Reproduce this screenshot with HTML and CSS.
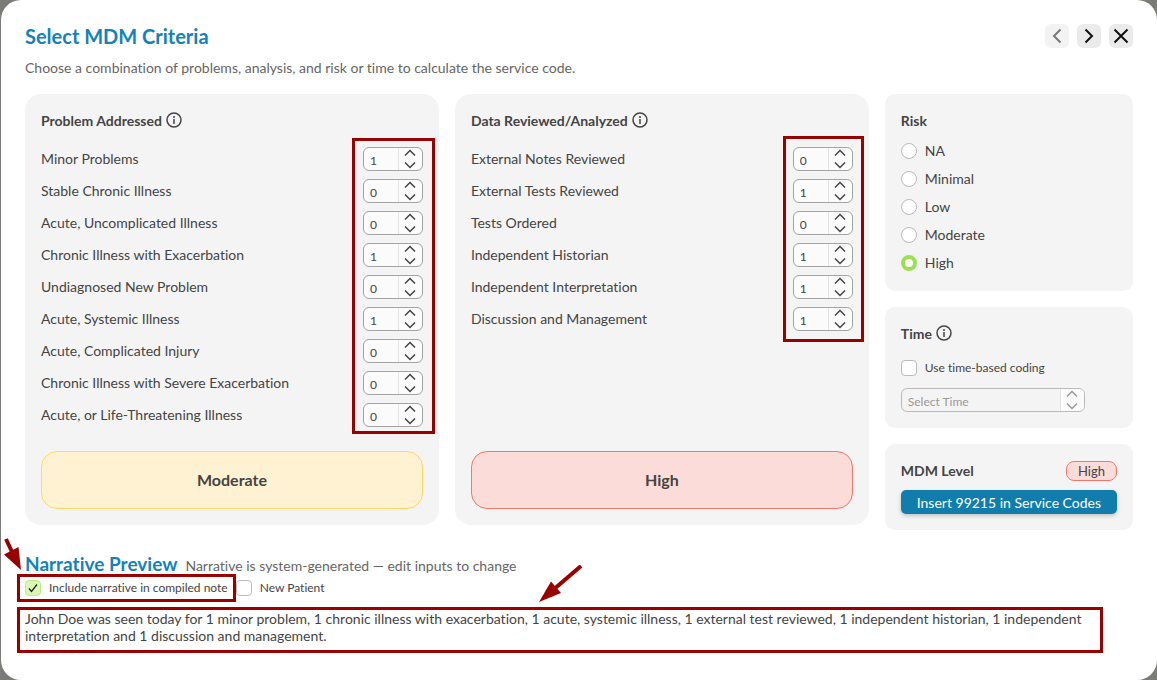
FILE: index.html
```html
<!DOCTYPE html>
<html lang="en">
<head>
    <meta charset="UTF-8">
    <meta name="viewport" content="width=device-width, initial-scale=1.0">
    <title>Select MDM Criteria</title>
    <link rel="stylesheet" href="styles.css">
</head>
<body>
    <!-- Shared icons -->
    <svg class="sprite" aria-hidden="true">
        <symbol id="up" viewBox="0 0 12 8"><path d="M1 6.5 6 1.5 11 6.5"/></symbol>
        <symbol id="down" viewBox="0 0 12 8"><path d="M1 1.5 6 6.5 11 1.5"/></symbol>
        <symbol id="info" viewBox="0 0 16 16"><circle cx="8" cy="8" r="7"/><path d="M8 7V12M8 4V6"/></symbol>
    </svg>

    <main class="modal">
        <header class="header">
            <h1>Select MDM Criteria</h1>
            <nav class="tools">
                <button type="button" aria-label="Previous" disabled><svg viewBox="0 0 24 24"><path d="M15.5 5.5 9 12l6.5 6.5"/></svg></button>
                <button type="button" aria-label="Next"><svg viewBox="0 0 24 24"><path d="M8.5 5.5 15 12l-6.5 6.5"/></svg></button>
                <button type="button" aria-label="Close"><svg viewBox="0 0 24 24"><path d="M5.5 5.5l13 13M18.5 5.5l-13 13"/></svg></button>
            </nav>
        </header>
        <p class="subtitle">Choose a combination of problems, analysis, and risk or time to calculate the service code.</p>

        <div class="layout">
            <div class="criteria">
                <section class="card">
                    <h2>Problem Addressed <svg class="info"><use href="#info"/></svg></h2>
                    <div class="rows" id="problems"></div>
                    <div class="result moderate">Moderate</div>
                </section>
                <section class="card">
                    <h2>Data Reviewed/Analyzed <svg class="info"><use href="#info"/></svg></h2>
                    <div class="rows" id="data"></div>
                    <div class="result high">High</div>
                </section>
            </div>

            <aside class="sidebar">
                <section class="card small risk">
                    <h2>Risk</h2>
                    <label><input type="radio" name="risk">NA</label>
                    <label><input type="radio" name="risk">Minimal</label>
                    <label><input type="radio" name="risk">Low</label>
                    <label><input type="radio" name="risk">Moderate</label>
                    <label><input type="radio" name="risk" checked>High</label>
                </section>
                <section class="card small time">
                    <h2>Time <svg class="info"><use href="#info"/></svg></h2>
                    <label class="check"><input type="checkbox">Use time-based coding</label>
                    <div class="select">
                        <select aria-label="Select Time" disabled>
                            <option>Select Time</option>
                        </select>
                        <span class="arrows"><svg><use href="#up"/></svg><svg><use href="#down"/></svg></span>
                    </div>
                </section>
                <section class="card small level">
                    <div class="level-head">
                        <h2>MDM Level</h2>
                        <span class="pill">High</span>
                    </div>
                    <button type="button" class="insert">Insert 99215 in Service Codes</button>
                </section>
            </aside>
        </div>

        <section class="narrative">
            <div class="narrative-head">
                <h2>Narrative Preview</h2>
                <span>Narrative is system-generated — edit inputs to change</span>
            </div>
            <div class="options">
                <label class="check marked"><input type="checkbox" checked>Include narrative in compiled note</label>
                <label class="check"><input type="checkbox">New Patient</label>
            </div>
            <p class="preview">John Doe was seen today for 1 minor problem, 1 chronic illness with exacerbation, 1 acute, systemic illness, 1 external test reviewed, 1 independent historian, 1 independent interpretation and 1 discussion and management.</p>
            <svg class="pointer pointer-left" viewBox="0 0 18 34"><path class="shaft" d="M2 1 9 16"/><path class="tip" d="M0 16.5 14.500 9 17 32Z"/></svg>
            <svg class="pointer pointer-mid" viewBox="0 0 44 38"><path class="shaft" d="M42 1 14 25"/><path class="tip" d="M0 37 12 16.500 22 28Z"/></svg>
        </section>
    </main>

    <script src="script.js"></script>
</body>
</html>
```

FILE: styles.css
```css
*, *::after {
    box-sizing: border-box;
}
body {
    margin: 0;
    background-color: #7b7b78;
    font-family: Lato, "Liberation Sans", sans-serif;
    font-size: 14px;
    font-variant-ligatures: none;
    line-height: 17px;
    color: #444;
}
h1, h2, p {
    margin: 0;
}
button, input, select {
    font-family: inherit;
    color: inherit;
}
svg {
    display: block;
    fill: none;
    stroke: currentColor;
}
.sprite {
    position: absolute;
    width: 0;
    height: 0;
}
.modal {
    min-height: 100vh;
    margin-left: 1px;
    padding: 24px;
    background-color: white;
    border-radius: 20px;
}

/* Header */
.header {
    display: flex;
    justify-content: space-between;
    align-items: center;
}
h1, .narrative h2 {
    font-size: 20px;
    line-height: 24px;
    color: #1482b8;
}
.tools {
    display: flex;
    gap: 8px;
}
.tools button {
    width: 24px;
    height: 24px;
    padding: 0;
    border: none;
    border-radius: 6px;
    background-color: #ebebeb;
    color: #111;
    stroke-width: 2;
}
.tools button:disabled {
    background-color: #f3f3f3;
    color: #777;
}
.subtitle {
    margin: 11px 0 18px;
    color: #666;
}

/* Cards */
.layout {
    display: grid;
    grid-template-columns: 17fr 5fr;
    gap: 16px;
    align-items: start;
}
.criteria {
    display: grid;
    grid-template-columns: 1fr 1fr;
    gap: 16px;
}
.card {
    display: flex;
    flex-direction: column;
    padding: 16px;
    background-color: #f4f4f4;
    border-radius: 16px;
}
.card.small {
    border-radius: 10px;
}
.card h2 {
    display: flex;
    align-items: center;
    gap: 4px;
    font-size: 14px;
    line-height: 22px;
}
.info {
    width: 16px;
    height: 16px;
    margin-bottom: 2px;
    stroke-width: 1.5px;
}
.rows {
    position: relative;
    margin: 11px 0 20px;
}
.row {
    display: flex;
    justify-content: space-between;
    align-items: center;
    height: 32px;
}
.row label {
    padding-bottom: 2px;
}
/* Highlight frame around the steppers */
.rows::after {
    content: "";
    position: absolute;
    top: -5px;
    right: -12px;
    bottom: -3px;
    width: 83px;
    border: 3px solid #900;
    pointer-events: none;
}
#data::after {
    top: -7px;
    right: -11px;
    bottom: -7px;
    width: 81px;
}
.stepper {
    display: flex;
    width: 60px;
    height: 24px;
    border: 1px solid #a3a3a3;
    border-radius: 6px;
    background-color: #fbfbfb;
    overflow: hidden;
}
.stepper input {
    flex: 1;
    min-width: 0;
    padding: 2px 0 0 6px;
    border: none;
    background: none;
    font-size: 12px;
    appearance: textfield;
}
.stepper input::-webkit-inner-spin-button {
    appearance: none;
}
.arrows {
    display: flex;
    flex-direction: column;
    justify-content: space-between;
    align-items: center;
    width: 24px;
    padding: 1px 0;
    border-left: 1px solid #e4e4e4;
    stroke-width: 1.5px;
}
.arrows button {
    padding: 0;
    border: none;
    background: none;
}
.arrows svg {
    width: 12px;
    height: 8px;
}
.result {
    margin-top: auto;
    padding: 18px;
    border: 1px solid;
    border-radius: 16px;
    font-size: 16px;
    font-weight: bold;
    line-height: 20px;
    text-align: center;
}
.moderate {
    background-color: #fff2d2;
    border-color: #ffd966;
}
.high {
    background-color: #fcdcd9;
    border-color: #f37769;
}

/* Sidebar */
.sidebar {
    display: grid;
    gap: 16px;
}
.risk label, .check {
    display: flex;
    align-items: center;
    gap: 8px;
}
.risk label {
    height: 28px;
}
.risk h2 {
    margin-bottom: 4px;
}
.card.risk {
    padding-bottom: 15px;
}
input[type="radio"], input[type="checkbox"] {
    appearance: none;
    width: 16px;
    height: 16px;
    margin: 0;
    border: 1px solid #bbb;
    border-radius: 4px;
    background-color: white;
}
input[type="radio"] {
    margin-top: 2px;
    border-radius: 50%;
}
input[type="radio"]:checked {
    border: 4px solid #9be052;
}
input[type="checkbox"]:checked {
    border-color: #bdeb8b;
    background: #d9f7b5 url("data:image/svg+xml,%3Csvg xmlns='http://www.w3.org/2000/svg' viewBox='0 0 14 14'%3E%3Cpath d='M3 7.500l2.500 3L11 3.500' fill='none' stroke='%23222' stroke-width='1.300'/%3E%3C/svg%3E");
}
.check {
    font-size: 12px;
    line-height: 16px;
}
.time h2 {
    margin-bottom: 15px;
}
.select {
    display: flex;
    width: 184px;
    height: 24px;
    margin-top: 12px;
    border: 1px solid #bbb;
    border-radius: 6px;
    overflow: hidden;
    color: #999;
}
.select select {
    flex: 1;
    appearance: none;
    padding: 2px 6px 0;
    border: none;
    background: none;
    font-size: 12px;
    opacity: 1;
}
.select .arrows {
    background-color: #fbfbfb;
}
.level-head {
    display: flex;
    justify-content: space-between;
    align-items: center;
    margin-bottom: 8px;
}
.pill {
    padding: 1px 11px;
    border: 1px solid #f37769;
    border-radius: 8px;
    background-color: #fcdcd9;
    font-size: 13px;
    line-height: 16px;
}
.insert {
    height: 24px;
    padding: 0;
    border: none;
    border-radius: 5px;
    background-color: #107dac;
    box-shadow: 0 2px 4px rgba(0,0,0,0.2);
    color: white;
    font-size: 14px;
}

/* Narrative */
.narrative {
    position: relative;
    margin-top: 22px;
}
.narrative h2 {
    font-size: 19px;
}
.narrative-head {
    display: flex;
    align-items: baseline;
    gap: 8px;
    color: #666;
}
.options {
    display: flex;
    gap: 8px;
    margin-top: 4px;
}
.marked, .preview {
    position: relative;
}
.marked::after, .preview::after {
    content: "";
    position: absolute;
    inset: -6px -8px;
    border: 3px solid #900;
    pointer-events: none;
}
.preview {
    margin: 14px 38px 0 0;
}
.preview::after {
    inset: -3px -8px -9px -8px;
}
.pointer {
    position: absolute;
    color: #900;
}
.pointer-left {
    top: -14px;
    left: -21px;
    width: 18px;
    height: 34px;
}
.pointer-mid {
    top: 13px;
    left: 514px;
    width: 44px;
    height: 38px;
}
.shaft {
    stroke-width: 4;
}
.tip {
    fill: currentColor;
    stroke: none;
}
```

FILE: script.js
```js
const problems = [
    ['Minor Problems', 1],
    ['Stable Chronic Illness', 0],
    ['Acute, Uncomplicated Illness', 0],
    ['Chronic Illness with Exacerbation', 1],
    ['Undiagnosed New Problem', 0],
    ['Acute, Systemic Illness', 1],
    ['Acute, Complicated Injury', 0],
    ['Chronic Illness with Severe Exacerbation', 0],
    ['Acute, or Life-Threatening Illness', 0]
];
const data = [
    ['External Notes Reviewed', 0],
    ['External Tests Reviewed', 1],
    ['Tests Ordered', 0],
    ['Independent Historian', 1],
    ['Independent Interpretation', 1],
    ['Discussion and Management', 1]
];

function renderRows(name, rows) {
    document.getElementById(name).innerHTML = rows.map(([label, value], i) => `
        <div class="row">
            <label for="${name}-${i}">${label}</label>
            <div class="stepper">
                <input type="number" id="${name}-${i}" min="0" value="${value}">
                <div class="arrows">
                    <button type="button" data-step="1" aria-label="Increase"><svg><use href="#up"/></svg></button>
                    <button type="button" data-step="-1" aria-label="Decrease"><svg><use href="#down"/></svg></button>
                </div>
            </div>
        </div>`).join('');
}

renderRows('problems', problems);
renderRows('data', data);

document.querySelectorAll('.stepper button').forEach(button => {
    button.addEventListener('click', () => {
        const input = button.closest('.stepper').querySelector('input');
        input.value = Math.max(0, Number(input.value) + Number(button.dataset.step));
    });
});
```
